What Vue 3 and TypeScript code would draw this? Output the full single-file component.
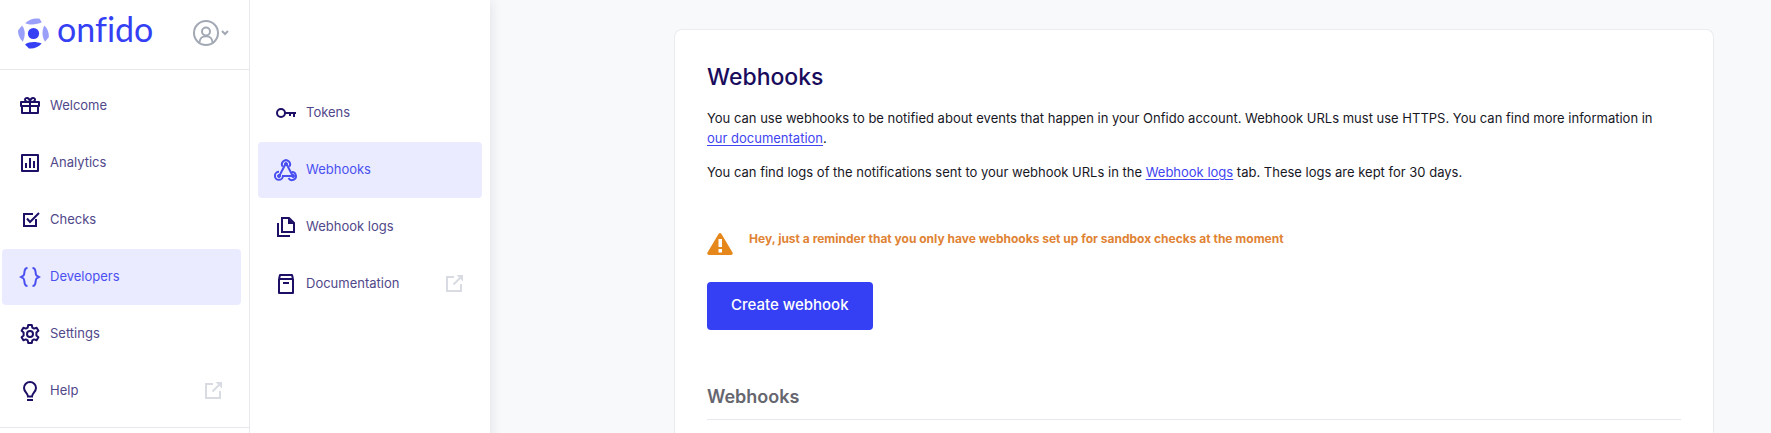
<script setup lang="ts">
interface NavItem {
  label: string
  icon: string
  active?: boolean
  external?: boolean
}

const primaryItems: NavItem[] = [
  { label: 'Welcome', icon: 'gift' },
  { label: 'Analytics', icon: 'chart' },
  { label: 'Checks', icon: 'check' },
  { label: 'Developers', icon: 'braces', active: true },
  { label: 'Settings', icon: 'gear' },
  { label: 'Help', icon: 'bulb', external: true },
]

const developerItems: NavItem[] = [
  { label: 'Tokens', icon: 'key' },
  { label: 'Webhooks', icon: 'webhook', active: true },
  { label: 'Webhook logs', icon: 'files' },
  { label: 'Documentation', icon: 'book', external: true },
]

const menus = [
  { name: 'Main', kind: 'primary', items: primaryItems },
  { name: 'Developers', kind: 'secondary', items: developerItems },
]
</script>

<template>
  <div class="page">
    <aside v-for="menu in menus" :key="menu.name" class="sidebar" :class="menu.kind">
      <header v-if="menu.kind === 'primary'" class="brand-bar">
        <a href="#" class="brand">
          <svg class="brand-mark" width="32" height="32" viewBox="0 0 32 32" aria-hidden="true">
            <circle cx="16.500" cy="16.500" r="5.600" fill="#353ff4" />
            <path d="M8.200 6.200C12 2 18 .6 22.600 1.800L24.800 5.300C20 7.800 13 8.200 8.200 6.200Z" fill="#9a9ffa" />
            <path d="M5 8.600C8.500 13 8.500 19 5.800 24.800C2.500 21.500 1 18 1 13.500Z" fill="#9a9ffa" />
            <path d="M27.300 8.500C30.800 11.500 32 16 31.800 20.300L28 24.800C24.800 19.500 24.800 13.500 27.300 8.500Z" fill="#9a9ffa" />
            <path d="M8 27.500C12.500 24.600 18.500 24.300 24.700 26.600C21 30.500 16.500 32 12 31.400Z" fill="#353ff4" />
          </svg>
          <span class="brand-name">onfido</span>
        </a>
        <button type="button" class="account" aria-label="Account menu">
          <svg width="26" height="26" viewBox="0 0 26 26" fill="none" stroke="#a2a8b4" stroke-width="2" aria-hidden="true">
            <circle cx="13" cy="13" r="12" />
            <circle cx="13" cy="11.500" r="4" />
            <path d="M6.500 22.500C6.500 14 19.500 14 19.500 22.500" />
          </svg>
          <svg width="8" height="6" viewBox="0 0 8 6" fill="none" stroke="#a2a8b4" stroke-width="2" aria-hidden="true">
            <path d="M1 1l3 3 3-3" />
          </svg>
        </button>
      </header>
      <nav class="menu" :aria-label="menu.name">
        <a
          v-for="item in menu.items"
          :key="item.label"
          href="#"
          class="menu-item"
          :class="{ active: item.active }"
        >
          <svg class="icon" width="24" height="24" viewBox="0 0 24 24" fill="none" stroke="currentColor" stroke-width="2" aria-hidden="true">
            <template v-if="item.icon === 'gift'">
              <path d="M3 8h18v4H3zM4 12v7h16v-7M12 8v11" stroke-linejoin="round" />
              <path d="M12 8C10 8 7 7.500 7 5.500S11.500 2.500 12 8C12.500 2.500 17 3.500 17 5.500S14 8 12 8" />
            </template>
            <template v-else-if="item.icon === 'chart'">
              <path d="M4 4h16v16H4z" stroke-linejoin="round" />
              <path d="M8 12v5M12 7v10M16 10v7" />
            </template>
            <template v-else-if="item.icon === 'check'">
              <path d="M15 6H6v12h12v-7M9 10.500l3 3.500L21 5" />
            </template>
            <template v-else-if="item.icon === 'braces'">
              <path d="M9.500 3C5 3 7.500 8 5.500 10.500L3 12l2.500 1.500C7.500 16 5 21 9.500 21M14.500 3C19 3 16.500 8 18.500 10.500L21 12l-2.500 1.500C16.500 16 19 21 14.500 21" />
            </template>
            <template v-else-if="item.icon === 'gear'">
              <path
                d="M10.200 3h3.600l.5 2.600 1.800 1 2.500-.9 1.800 3.100-2 1.700v3l2 1.700-1.800 3.100-2.500-.9-1.800 1-.5 2.600h-3.600l-.5-2.600-1.800-1-2.500.9-1.800-3.100 2-1.700v-3l-2-1.700 1.800-3.100 2.500.9 1.800-1z"
                stroke-linejoin="round"
              />
              <circle cx="12" cy="12" r="3" />
            </template>
            <template v-else-if="item.icon === 'bulb'">
              <path d="M10 17.500C10 14 6 13 6 9a6 6 0 0 1 12 0c0 4-4 5-4 8.500zM9 21h6" />
            </template>
            <template v-else-if="item.icon === 'key'">
              <circle cx="7" cy="12" r="4" />
              <path d="M11 12h11M16 12v3M20 12v4" />
            </template>
            <template v-else-if="item.icon === 'webhook'">
              <path d="M8.800 8.700A4 4 0 1 1 15.200 8.700M5 13.800A4 4 0 1 0 8.900 18H19M14.500 20.100A4 4 0 1 0 17.600 14.100" />
              <path d="M11.500 6L5.500 17.500M12.500 6L18.500 17.500" />
              <circle cx="12" cy="6" r="1.500" fill="currentColor" stroke-width="1" />
              <circle cx="5" cy="18" r="1.500" fill="currentColor" stroke-width="1" />
              <circle cx="19" cy="18" r="1.500" fill="currentColor" stroke-width="1" />
            </template>
            <template v-else-if="item.icon === 'files'">
              <path d="M4 8v13h12M8 3h7l5 5v9H8z" />
              <path d="M14 3v6h6z" fill="currentColor" stroke="none" />
            </template>
            <template v-else>
              <path d="M5 7v14h14V7zM5 7l1-4h12l1 4M9 11h6" stroke-linejoin="round" />
            </template>
          </svg>
          <span class="menu-label">{{ item.label }}</span>
          <svg v-if="item.external" class="external" width="18" height="18" viewBox="0 0 18 18" fill="none" stroke="#d8dce2" stroke-width="2" aria-hidden="true">
            <path d="M9 2H2v14h14V9M8.500 9.500L15 3" />
            <path d="M11.500 0H18v6.500z" fill="#d8dce2" stroke="none" />
          </svg>
        </a>
      </nav>
    </aside>

    <main class="content">
      <section class="card">
        <h1 class="title">Webhooks</h1>
        <p class="text">
          You can use webhooks to be notified about events that happen in your Onfido account. Webhook URLs must use
          HTTPS. You can find more information in <a href="#">our documentation</a>.
        </p>
        <p class="text">
          You can find logs of the notifications sent to your webhook URLs in the <a href="#">Webhook logs</a> tab.
          These logs are kept for 30 days.
        </p>
        <div class="notice" role="status">
          <svg width="26" height="22" viewBox="0 0 26 22" aria-hidden="true">
            <path d="M11.500 1Q13-.8 14.500 1L25.500 19.500Q26.200 22 24 22H2Q-.2 22 .5 19.500Z" fill="#e6871b" />
            <path d="M11.500 6h3.500v8h-3.500zM11.500 16h3.500v3.500h-3.500z" fill="#fff" />
          </svg>
          <strong>Hey, just a reminder that you only have webhooks set up for sandbox checks at the moment</strong>
        </div>
        <button type="button" class="create">Create webhook</button>
        <h2 class="subtitle">Webhooks</h2>
      </section>
    </main>
  </div>
</template>

<style>
body {
  margin: 0;
  background: #f8f9fb;
}
</style>

<style scoped>
.page {
  display: flex;
  min-height: 100vh;
  font-family: Inter, "Liberation Sans", sans-serif;
  font-size: 13px;
  line-height: 20px;
  color: #17171f;
}

.sidebar {
  box-sizing: border-box;
  flex: none;
  background: #fff;
}

.primary {
  width: 250px;
  border-right: 1px solid #e8e8ed;
}

.secondary {
  width: 240px;
  padding-top: 77px;
  box-shadow: 0 0 12px rgba(30, 30, 60, 0.12);
  clip-path: inset(0 -16px 0 0);
}

.brand-bar {
  display: flex;
  align-items: center;
  justify-content: space-between;
  box-sizing: border-box;
  height: 70px;
  padding: 0 20px 4px 17px;
  border-bottom: 1px solid #e8e8ed;
}

.brand {
  display: flex;
  align-items: center;
  gap: 8px;
  color: #353ff4;
  text-decoration: none;
}

.brand-name {
  padding-bottom: 8px;
  font-family: Lato, sans-serif;
  font-size: 34px;
  font-variant-ligatures: none;
  line-height: 36px;
}

.account {
  display: flex;
  align-items: center;
  gap: 2px;
  padding: 0;
  border: 0;
  background: none;
}

.menu {
  display: flex;
  flex-direction: column;
  gap: 1px;
  padding: 8px;
}

.primary .menu {
  padding-left: 2px;
  border-bottom: 1px solid #e8e8ed;
}

.menu-item {
  display: flex;
  align-items: center;
  gap: 8px;
  box-sizing: border-box;
  height: 56px;
  padding: 0 19px 0 16px;
  border-radius: 4px;
  color: #1d0f66;
  text-decoration: none;
}

.menu-label {
  flex: 1;
  padding-bottom: 2px;
  color: #51488a;
}

.active,
.active .menu-label {
  color: #4a50f0;
}

.active {
  background: #ebebff;
}

.content {
  display: flex;
  flex: 1;
  min-width: 0;
  padding: 29px 57px 0 184px;
}

.card {
  box-sizing: border-box;
  flex: 1;
  min-width: 0;
  padding: 32px;
  border: 1px solid #ebecf0;
  border-bottom: 0;
  border-radius: 8px 8px 0 0;
  background: #fff;
}

.title {
  margin: 0 0 16px;
  font-size: 23px;
  font-weight: 500;
  line-height: 30px;
  color: #1a0c5c;
}

.text {
  margin: 0 0 14px;
}

.text a {
  color: #4145f0;
  text-underline-offset: 2px;
  white-space: nowrap;
}

.notice {
  display: flex;
  gap: 16px;
  margin-top: 47px;
  font-size: 12px;
  color: #e08334;
}

.notice svg {
  flex: none;
  margin-top: 4px;
}

.create {
  display: block;
  height: 48px;
  margin-top: 27px;
  padding: 0 24px 3px;
  border: 0;
  border-radius: 4px;
  background: #353ff4;
  font: 500 15px Inter, sans-serif;
  color: #fff;
}

.subtitle {
  margin: 55px 0 0;
  padding-bottom: 10px;
  border-bottom: 1px solid #e8e8ee;
  font-size: 18px;
  font-weight: 600;
  line-height: 24px;
  color: #66666f;
}
</style>
